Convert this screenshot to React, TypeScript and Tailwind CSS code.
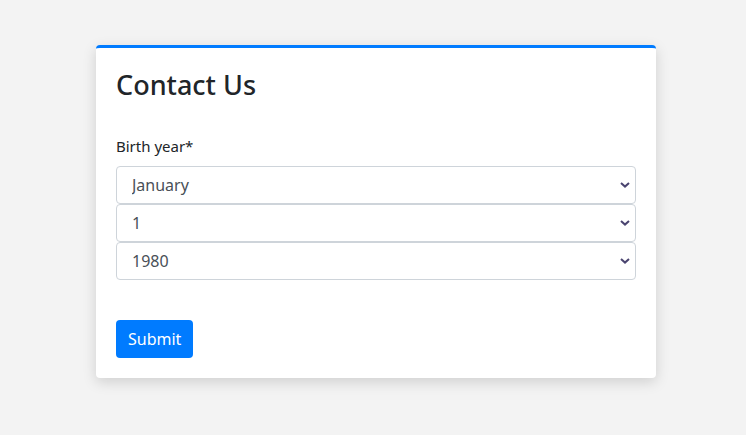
import { useState } from 'react'

const months = [
  'January', 'February', 'March', 'April', 'May', 'June',
  'July', 'August', 'September', 'October', 'November', 'December',
]
const days = Array.from({ length: 31 }, (_, i) => String(i + 1))
const years = Array.from({ length: 41 }, (_, i) => String(1980 + i))

function Select({ value, options, onChange }: { value: string; options: string[]; onChange: (v: string) => void }) {
  return (
    <div className="relative">
      <select
        value={value}
        onChange={(e) => onChange(e.target.value)}
        className="block w-full h-[38px] appearance-none rounded-[4px] border border-[#ced4da] bg-white pl-[15px] pr-8 text-[16px] text-[#495057] outline-none"
      >
        {options.map((o) => (
          <option key={o} value={o}>{o}</option>
        ))}
      </select>
      <svg
        className="pointer-events-none absolute right-[6px] top-1/2 -translate-y-1/2"
        width="10"
        height="6"
        viewBox="0 0 10 6"
      >
        <path d="M1 1l4 3.6L9 1" fill="none" stroke="#4a4470" strokeWidth="2" />
      </svg>
    </div>
  )
}

export default function App() {
  const [month, setMonth] = useState('January')
  const [day, setDay] = useState('1')
  const [year, setYear] = useState('1980')

  return (
    <div className="min-h-screen bg-[#f3f3f3] pt-[45px] font-['Noto_Sans','Open_Sans',sans-serif] text-[#212529]">
      <div className="ml-[96px] w-[560px] rounded-[4px] border-t-[3px] border-[#007bff] bg-white p-5 shadow-[0_4px_14px_rgba(0,0,0,0.15)]">
        <h2 className="text-[27px] font-medium leading-[1.2] mb-[33px] mt-[1px]">Contact Us</h2>
        <form onSubmit={(e) => e.preventDefault()}>
          <label className="block mb-2 text-[15px] leading-6">Birth year*</label>
          <Select value={month} options={months} onChange={setMonth} />
          <Select value={day} options={days} onChange={setDay} />
          <Select value={year} options={years} onChange={setYear} />
          <button
            type="submit"
            className="mt-10 h-[38px] rounded-[4px] bg-[#007bff] px-3 text-[16px] text-white"
          >
            Submit
          </button>
        </form>
      </div>
    </div>
  )
}
